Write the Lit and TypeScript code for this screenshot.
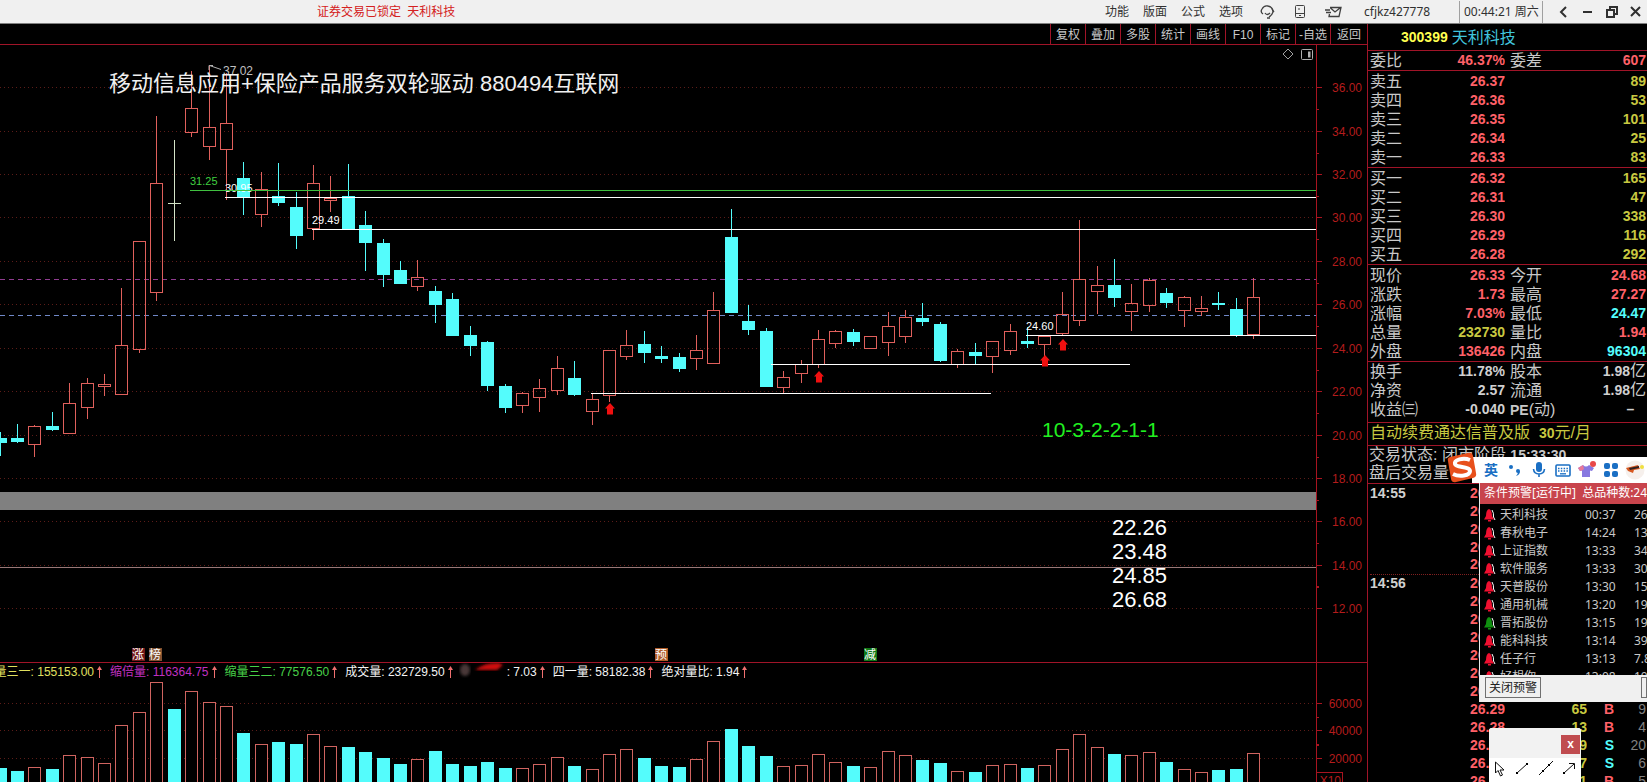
import { LitElement, html, svg, css } from "lit";
import { customElement, state } from "lit/decorators.js";

type Candle = [kind: "r" | "c" | "w", high: number, top: number, bottom: number, low: number];

/* Chart geometry is expressed on a 1316px wide plot and scaled to the real width. */
const BASE = 1316;
const STEP = 17.413;

const candles: Candle[] = [
  ["c", 432, 438, 443, 456], ["c", 424, 438, 442, 443], ["r", 425, 426, 444, 456], ["c", 412, 426, 430, 431],
  ["r", 383, 403, 433, 433], ["r", 378, 383, 407, 418], ["r", 374, 384, 386, 395], ["r", 288, 345, 394, 394],
  ["r", 241, 241, 349, 352], ["r", 116, 183, 292, 300], ["w", 140, 203, 204, 241], ["r", 71, 108, 132, 136],
  ["r", 65, 127, 146, 159], ["r", 73, 123, 149, 199], ["c", 162, 178, 198, 215], ["r", 172, 189, 214, 226],
  ["c", 163, 196, 203, 206], ["c", 192, 207, 236, 249], ["r", 165, 183, 228, 239], ["r", 176, 198, 200, 211],
  ["c", 164, 196, 229, 229], ["c", 211, 225, 243, 271], ["c", 239, 243, 275, 287], ["c", 261, 270, 284, 284],
  ["r", 260, 277, 286, 290], ["c", 286, 291, 305, 323], ["c", 293, 299, 336, 336], ["c", 326, 335, 346, 356],
  ["c", 341, 342, 386, 391], ["c", 384, 386, 408, 413], ["r", 392, 393, 405, 412], ["r", 379, 388, 397, 411],
  ["r", 356, 368, 390, 394], ["c", 361, 378, 395, 396], ["r", 393, 399, 411, 424], ["r", 350, 350, 395, 401],
  ["r", 330, 345, 356, 359], ["c", 331, 344, 353, 363], ["c", 346, 356, 359, 363], ["c", 353, 357, 369, 372],
  ["r", 335, 350, 358, 369], ["r", 292, 310, 363, 363], ["c", 209, 237, 313, 313], ["c", 305, 321, 330, 335],
  ["c", 328, 331, 387, 387], ["r", 371, 377, 387, 393], ["r", 360, 364, 373, 382], ["r", 330, 339, 364, 367],
  ["r", 330, 331, 343, 347], ["c", 329, 332, 342, 346], ["r", 336, 336, 348, 348], ["r", 312, 326, 342, 355],
  ["r", 310, 317, 336, 342], ["c", 303, 318, 322, 326], ["c", 322, 324, 361, 362], ["r", 349, 351, 364, 367],
  ["c", 343, 352, 356, 364], ["r", 341, 341, 356, 372], ["r", 324, 331, 350, 354], ["c", 327, 341, 344, 348],
  ["r", 336, 336, 344, 356], ["r", 292, 314, 333, 335], ["r", 220, 279, 320, 325], ["r", 266, 285, 291, 313],
  ["c", 259, 285, 298, 307], ["r", 284, 303, 311, 330], ["r", 278, 280, 305, 311], ["c", 288, 293, 303, 308],
  ["r", 296, 297, 310, 326], ["r", 296, 308, 311, 315], ["c", 292, 303, 305, 310], ["c", 298, 309, 335, 337],
  ["r", 278, 297, 334, 338],
];

const volumeTops = [
  768, 771, 767, 769, 755, 757, 763, 725, 712, 682, 709, 691, 702, 706, 733, 744, 742, 744, 734, 746, 747, 752, 758,
  764, 759, 751, 764, 766, 762, 768, 768, 764, 757, 766, 769, 754, 749, 758, 766, 767, 759, 741, 729, 746, 756, 766,
  765, 754, 762, 766, 767, 751, 755, 760, 763, 771, 772, 765, 764, 768, 765, 749, 734, 747, 754, 755, 752, 762, 769,
  772, 770, 769, 753,
];

const priceTicks: [string, number][] = [
  ["36.00", 87], ["34.00", 131], ["32.00", 174], ["30.00", 217], ["28.00", 261], ["26.00", 304], ["24.00", 348],
  ["22.00", 391], ["20.00", 435], ["18.00", 478], ["16.00", 521], ["14.00", 565], ["12.00", 608],
];
const volumeTicks: [string, number][] = [["60000", 703], ["40000", 730], ["20000", 758]];
const ARROWS: [number, number][] = [[610, 403], [819, 371], [1045, 355], [1063, 339]];

const TOP = 45;
const VTOP = 680;

@customElement("app-root")
export class AppRoot extends LitElement {
  @state() private plotWidth = BASE;
  private observer?: ResizeObserver;

  static styles = css`
    :host {
      display: flex; flex-direction: column; height: 100vh; overflow: hidden; background: #000;
      font: 12px/16px "Liberation Sans", "Noto Sans CJK SC", sans-serif; color: #c8c8c8;
    }
    * { box-sizing: border-box; }
    svg { display: block; }
    button { font: inherit; color: inherit; background: none; border: 0; padding: 0; margin: 0; white-space: nowrap; }
    table { border-collapse: collapse; table-layout: fixed; width: 100%; }
    td, th { padding: 0; font-weight: normal; text-align: left; white-space: nowrap; overflow: hidden; }

    .topbar {
      display: flex; align-items: center; height: 24px; flex: none; background: #f0f0f0; color: #303030;
      border-bottom: 1px solid #808080;
      font-family: "Noto Sans", "Noto Sans CJK SC", sans-serif;
    }
    .locked { flex: 1; padding-left: 317px; color: #d42020; white-space: pre; overflow: hidden; }
    .menu { display: flex; gap: 14px; }
    .icons { display: flex; align-items: center; gap: 20px; padding: 0 22px 0 17px; }
    .account { width: 95px; }
    .clock { border: solid #a0a0a0; border-width: 0 1px; height: 22px; line-height: 22px; padding-left: 4px; width: 84px; }
    .window { display: flex; gap: 8px; padding: 0 3px 0 13px; }

    .body { display: flex; flex: 1; min-height: 0; }
    .left { display: flex; flex-direction: column; flex: 1; min-width: 0; border-right: 1px solid #a01428; }
    .tools { display: flex; justify-content: flex-end; height: 21px; flex: none; border-bottom: 1px solid #a01428; }
    .tools button { width: 35px; border-left: 1px solid #a01428; padding-top: 1px; }
    .tools button:last-child { width: 37px; }
    .main { display: flex; height: 617px; flex: none; }
    .lower { display: flex; flex: 1; min-height: 0; }
    .plot { flex: 1; min-width: 0; overflow: hidden; }
    .axis { width: 51px; flex: none; }
    .plot svg, .axis svg { width: 100%; height: 100%; overflow: hidden; }
    .band { display: flex; height: 18px; flex: none; border-top: 1px solid #a01428; }
    .indicators { display: flex; align-items: center; flex: 1; min-width: 0; white-space: nowrap; gap: 8px; }
    .spine { width: 51px; flex: none; border-left: 1px solid #a81420; }
    .ind { display: flex; align-items: center; gap: 3px; flex: none; }
    .ind.first { justify-content: flex-end; width: 102px; }
    .ind svg { flex: none; }
    .yellow { color: #e0e060; } .purple { color: #c030c0; } .green { color: #48d048; } .white { color: #f4f4f4; }
    .smear { width: 38px; height: 16px; overflow: visible; }

    .side { position: relative; width: 279px; flex: none; overflow: hidden; }
    .side section, .side header { border-bottom: 1px solid #a01428; padding-left: 2px; font-size: 16px; line-height: 19px; }
    .side header { height: 27px; display: flex; align-items: center; gap: 4px; padding-left: 33px; color: #40c4dc; }
    .code { font-size: 14px; font-weight: bold; color: #ffff50; }
    .side tr { height: 19px; }
    .pad { padding-top: 1px; }
    .side section.fund { padding-bottom: 3px; }
    .c1 { width: 54px; } .c2 { width: 81px; } .c3 { width: 66px; }
    .side th + td + th { padding-left: 5px; }
    .num { font-size: 14px; font-weight: bold; text-align: right; }
    .num.last { padding-right: 1px; }
    .unit { font-size: 16px; font-weight: normal; line-height: 1; }
    .up { color: #ff6068; } .down { color: #54fcfc; } .vol { color: #c8c840; } .plain { color: #d0d0d0; }
    .side section.promo { color: #c8c840; height: 23px; line-height: 20px; white-space: pre; }
    .side section.status { height: 38px; line-height: 18px; padding-left: 1px; white-space: nowrap; overflow: hidden; }
    .small { font-size: 14px; font-weight: bold; line-height: 1; }

    .ticks tr { height: 18px; }
    .ticks { font-size: 14px; line-height: 18px; font-weight: bold; margin-left: 2px; width: 276px; }
    .side .ticks tr { height: 18px; }
    .ticks td { font-weight: bold; text-align: right; line-height: 17px; }
    .ticks td:first-child { text-align: left; color: #d0d0d0; }
    .ticks .minute td { border-top: 1px dotted #802020; }
    .ticks .grey { color: #808080; font-weight: normal; }
    .t1 { width: 60px; } .t2 { width: 75px; } .t3 { width: 82px; } .t4 { width: 27px; }

    .ime {
      position: absolute; top: 433px; right: 0; left: 104px; height: 26px; background: #fff; display: flex;
      align-items: center; padding-left: 7px; color: #1a6fc4;
    }
    .ime button { width: 24px; flex: none; display: grid; place-items: center; font-size: 14px; font-weight: bold; }
    .logo { position: absolute; left: -27px; top: -6px; }
    .alerts { position: absolute; top: 459px; left: 111px; right: 0; background: #000; border-left: 1px solid #e8e8e8;
      font: 12px/18px "Noto Sans", "Noto Sans CJK SC", sans-serif; overflow: hidden; }
    .alerts h2 { margin: 0; height: 21px; padding-left: 4px; background: #c8444c; color: #fff; font: inherit; line-height: 20px; white-space: pre; }
    .list { height: 171px; overflow: hidden; padding-top: 2px; }
    .list table { margin-left: 4px; width: 180px; }
    .side .list tr { height: 18px; }
    .a1 { width: 16px; } .a2 { width: 85px; } .a3 { width: 49px; }
    .foot { display: flex; justify-content: space-between; align-items: flex-start; height: 27px; padding: 2px 0 0 5px; background: #f0f0f0; color: #202020; }
    .foot button { height: 21px; border: 1px solid #707070; width: 56px; }
    .foot .next { width: 6px; }
    .draw { position: absolute; left: 121px; top: 704px; width: 92px; height: 60px; background: #fff; border-radius: 3px 3px 0 0; overflow: hidden; }
    .drawhead { height: 30px; background: #f2f2f2; display: flex; justify-content: flex-end; padding: 7px 1px 0 0; }
    .drawhead button { width: 19px; height: 19px; background: #c04c50; color: #fff; font-weight: bold; line-height: 17px; }
    .drawtools { display: flex; justify-content: space-around; padding-top: 3px; }

    .lbl { font-size: 12px; } .mark { font-size: 11px; } .title { font-size: 22px; fill: #f0f0f0; } .big { font-size: 22px; fill: #fff; }
    .ratio { font-size: 21px; fill: #20f020; } .tick { font-size: 12px; fill: #b41c1c; text-anchor: end; }
    .tag { font-size: 12px; fill: #fff; text-anchor: middle; }
  `;

  firstUpdated() {
    const plot = this.renderRoot.querySelector(".plot") as HTMLElement;
    const measure = () => { this.plotWidth = plot.clientWidth || BASE; };
    this.observer = new ResizeObserver(measure);
    this.observer.observe(plot);
    measure();
  }

  disconnectedCallback() {
    super.disconnectedCallback();
    this.observer?.disconnect();
  }

  private sx(x: number) { return Math.round((x * this.plotWidth) / BASE); }
  private cx(i: number) { return Math.floor(((STEP * i + 0.05) * this.plotWidth) / BASE); }

  private hline(y: number, from: number, to: number, color: string, dash = "none") {
    return svg`<line x1=${this.sx(from)} x2=${this.sx(to)} y1=${y + 0.5} y2=${y + 0.5} stroke=${color} stroke-dasharray=${dash}></line>`;
  }

  private candle([kind, high, top, bottom, low]: Candle, i: number) {
    const x = this.cx(i);
    if (kind === "w") return svg`<path d="M${x + 0.5} ${high}V${low}M${x - 6} ${top + 0.5}h13" stroke="#d4e4c8"></path>`;
    if (kind === "c") return svg`<path d="M${x + 0.5} ${high}V${low}" stroke="#54fcfc"></path>
      <rect x=${x - 6} y=${top} width="13" height=${Math.max(bottom - top, 2)} fill="#54fcfc"></rect>`;
    return svg`<path d="M${x + 0.5} ${high}V${top}M${x + 0.5} ${bottom}V${low + 1}" stroke="#e0605c"></path>
      <rect x=${x - 5.5} y=${top + 0.5} width="12" height=${Math.max(bottom - top, 1)} fill="none" stroke="#e0605c"></rect>`;
  }

  private tag(x: number, bg: string, text: string) {
    const left = this.sx(x);
    return svg`<rect x=${left} y="648" width="13" height="13" fill=${bg}></rect>
      <text class="tag" x=${left + 6} y="659">${text}</text>`;
  }

  private renderPlot() {
    const note = (x: number, y: number, text: string, fill: string, cls = "mark") =>
      svg`<text class=${cls} x=${this.sx(x)} y=${y} fill=${fill}>${text}</text>`;
    return html`<svg role="img" aria-label="K线图"><g transform="translate(0,${-TOP})">
      ${priceTicks.map(([, y]) => this.hline(y, 0, BASE, "#5c1c18", "1 3"))}
      ${this.hline(279, 0, BASE, "#903c90", "5 4")}
      ${this.hline(315, 0, BASE, "#7088c8", "5 4")}
      <rect x="0" y="492" width="100%" height="18" fill="#808080"></rect>
      ${this.hline(567, 0, BASE, "#987878")}
      ${candles.map((c, i) => this.candle(c, i))}
      ${this.hline(197, 225, BASE, "#fff")}
      ${note(225, 192, "30.95", "#fff")}
      ${this.hline(190, 190, BASE, "#40c040")}
      ${note(190, 185, "31.25", "#40d040")}
      ${this.hline(229, 312, BASE, "#fff")}
      ${note(312, 224, "29.49", "#fff")}
      ${this.hline(335, 1026, BASE, "#fff")}
      ${note(1026, 330, "24.60", "#fff")}
      ${this.hline(364, 771, 1130, "#fff")}
      ${this.hline(393, 591, 991, "#fff")}
      ${ARROWS.map(([x, y]) => svg`<path transform="translate(${this.sx(x)},${y})" d="M0 0L5 5.500H3V11.500H-3V5.500H-5Z" fill="#f01010"></path>`)}
      <path transform="translate(${this.sx(209)},65)" d="M0 5V0.500H4M0.500 0.500L12 4.500" stroke="#b0b0b0" fill="none"></path>
      ${note(223, 75, "37.02", "#c0c0c0", "lbl")}
      ${note(109, 91, "移动信息应用+保险产品服务双轮驱动 880494互联网", "#fff", "title")}
      ${note(1042, 437, "10-3-2-2-1-1", "#20f020", "ratio")}
      ${["22.26", "23.48", "24.85", "26.68"].map((t, i) => note(1112, 535 + i * 24, t, "#fff", "big"))}
      ${this.tag(132, "#701818", "涨")}${this.tag(149, "#805030", "榜")}${this.tag(655, "#b05c28", "预")}${this.tag(864, "#107818", "减")}
      <path transform="translate(${this.plotWidth - 28},54)" d="M0 -5L5 0L0 5L-5 0Z" fill="none" stroke="#a0a0a0"></path>
      <g transform="translate(${this.plotWidth - 15},49)" stroke="#b0b0b0"><rect x="0.500" y="0.500" width="11" height="10" rx="1" fill="none"></rect><rect x="7" y="2.500" width="2.500" height="6" fill="#b0b0b0" stroke="none"></rect></g>
    </g></svg>`;
  }

  private renderAxis(ticks: [string, number][], top: number, box = false) {
    const gap = ticks[1][1] - ticks[0][1];
    return html`<svg aria-hidden="true"><g transform="translate(0,${-top})" stroke="#a81420">
      <line x1="0.500" x2="0.500" y1=${top} y2="2000"></line>
      ${ticks.map(([t, y], i) => svg`<path d="M0 ${y + 0.5}h6M0 ${Math.round(y + gap / 2) + (i === ticks.length - 1 ? -gap : 0) + 0.5}h3"></path>
        <text class="tick" stroke="none" x="46" y=${y + 5}>${t}</text>`)}
      ${box ? svg`<rect x="0.500" y="772.500" width="26" height="20" fill="#000"></rect><text class="tick" stroke="none" x="25" y="785">X10</text>` : ""}
    </g></svg>`;
  }

  private renderVolume() {
    return html`<svg role="img" aria-label="成交量"><g transform="translate(0,${-VTOP})">
      ${volumeTicks.map(([, y]) => this.hline(y, 0, BASE, "#5c1c18", "1 3"))}
      ${volumeTops.map((y, i) => {
        const x = this.cx(i);
        return candles[i][0] === "c" || candles[i][0] === "w"
          ? svg`<rect x=${x - 6} y=${y} width="13" height="1000" fill="#54fcfc"></rect>`
          : svg`<rect x=${x - 5.5} y=${y + 0.5} width="12" height="1000" fill="#000" stroke="#d06460"></rect>`;
      })}
    </g></svg>`;
  }

  private indicator(text: string, cls: string) {
    return html`<span class="ind ${cls}">${text}<svg width="5" height="12"><path d="M2.500 0L5 4H0ZM2 3H3V12H2Z" fill="#f07070"></path></svg></span>`;
  }

  private orders(side: string, rows: [string, string, string][]) {
    return html`<section class="pad"><table aria-label=${side}><colgroup><col class="c1"><col class="c2"><col></colgroup>
      ${rows.map(([n, p, v]) => html`<tr><th scope="row">${side}${n}</th><td class="num up">${p}</td><td class="num last vol">${v}</td></tr>`)}
    </table></section>`;
  }

  private stats(rows: string[][], cls: string) {
    const value = (v: string) => v.endsWith("亿") ? html`${v.slice(0, -1)}<span class="unit">亿</span>` : v;
    const label = (v: string) => v.startsWith("PE") ? html`<span class="small">PE</span>${v.slice(2)}` : v;
    return html`<section class=${cls}><table><colgroup><col class="c1"><col class="c2"><col class="c3"><col></colgroup>
      ${rows.map(([a, av, ac, b, bv, bc]) => html`<tr><th scope="row">${a}</th><td class="num ${ac}">${value(av)}</td>
        <th scope="row">${label(b)}</th><td class="num last ${bc}">${value(bv)}</td></tr>`)}
    </table></section>`;
  }

  private renderTicks() {
    const rows: string[][] = [
      ...Array.from({ length: 12 }, (_, i) => [i === 0 ? "14:55" : i === 5 ? "14:56" : "", "26.33", "", "", ""]),
      ["", "26.29", "65", "B", "9"], ["", "26.28", "13", "B", "4"], ["", "26.28", "19", "S", "20"],
      ["", "26.28", "17", "S", "6"], ["", "26.30", "21", "B", "5"],
    ];
    return html`<table class="ticks"><colgroup><col class="t1"><col class="t2"><col class="t3"><col class="t4"><col></colgroup>
      ${rows.map(([t, p, v, d, n]) => html`<tr class=${t === "14:56" ? "minute" : ""}><td>${t}</td><td class="up">${p}</td>
        <td class="vol">${v}</td><td class=${d === "S" ? "down" : "up"}>${d}</td><td class="grey">${n}</td></tr>`)}</table>`;
  }

  private renderIme() {
    return html`<div class="ime">
      <svg class="logo" width="34" height="33" viewBox="0 0 34 33" role="img" aria-label="输入法"><path d="M5 6Q2 7 3 10L6 28Q7 32 11 31L28 27Q32 26 31 22L28 5Q27 1 23 2Z" fill="#e8501c"></path><path d="M25 9C18 6 9 9 10 13C11 17 25 15 25 20C25 25 14 26 8 23" fill="none" stroke="#fff" stroke-width="4"></path></svg>
      <button>英</button>
      <button aria-label="标点"><svg width="14" height="14"><circle cx="10" cy="8" r="2" fill="#1a6fc4"></circle><circle cx="3" cy="4" r="2" fill="#1a6fc4"></circle><path d="M12 8Q12 12 8 13Q10 11 10 9Z" fill="#1a6fc4"></path></svg></button>
      <button aria-label="语音"><svg width="14" height="16"><rect x="4" y="0" width="6" height="10" rx="3" fill="#1a6fc4"></rect><path d="M1.500 7Q2 12 7 12T12.500 7M7 12V15" stroke="#1a6fc4" stroke-width="1.600" fill="none"></path></svg></button>
      <button aria-label="键盘"><svg width="16" height="13"><rect x="1" y="1" width="14" height="11" rx="1" fill="none" stroke="#1a6fc4" stroke-width="1.600"></rect><path d="M3 4.500H13M3 7H13" stroke="#1a6fc4" stroke-width="1.500" stroke-dasharray="1.500 1.300"></path><path d="M5 9.800H11" stroke="#1a6fc4" stroke-width="1.300"></path></svg></button>
      <button aria-label="皮肤"><svg width="18" height="18"><path d="M5 4Q8 7 11 4L16 7L14 10L12 9.500V16H4V9.500L2 10L0 7Z" fill="#8878e0"></path><path d="M0 7L5 4L6 8L4 9.500L2 10Z" fill="#e87898"></path><circle cx="15" cy="3" r="3" fill="#e84848"></circle></svg></button>
      <button aria-label="工具箱"><svg width="14" height="14" fill="#1a6fc4"><rect width="6" height="6" rx="2"></rect><rect x="8" width="6" height="6" rx="2"></rect><rect y="8" width="6" height="6" rx="2"></rect><rect x="8" y="8" width="6" height="6" rx="2"></rect></svg></button>
      <button aria-label="头像"><svg width="20" height="20"><circle cx="10" cy="10" r="9.500" fill="#f6f0ec"></circle><path d="M1 8L13 5L15 9L9 10L8 13L3 11Z" fill="#d85820"></path><path d="M4 8L14 6V8L5 10Z" fill="#302020"></path><circle cx="17" cy="7" r="2" fill="#f0e040"></circle></svg></button>
    </div>`;
  }

  private renderAlerts() {
    const rows = [
      ["天利科技", "00:37", "26.33"], ["春秋电子", "14:24", "13.20"], ["上证指数", "13:33", "3400"], ["软件服务", "13:33", "3050"],
      ["天普股份", "13:30", "15.10"], ["通用机械", "13:20", "1960"], ["晋拓股份", "13:15", "19.20"], ["能科科技", "13:14", "39.10"],
      ["任子行", "13:13", "7.83"], ["好想你", "13:08", "10.20"],
    ];
    return html`<div class="alerts"><h2>条件预警[运行中]  总品种数:24</h2>
      <div class="list"><table><colgroup><col class="a1"><col class="a2"><col class="a3"><col></colgroup>
      ${rows.map(([n, t, p]) => html`<tr><td><svg width="12" height="13"><path d="M8 1Q10 4 9.500 8L11 11" fill="none" stroke="#fff"></path><path d="M5 0Q8 1 8 7L10 10.500H0L2 7Q2 1 5 0Z" fill=${n === "晋拓股份" ? "#109010" : "#f01030"}></path><rect x="4" y="11" width="3" height="1.500" fill=${n === "晋拓股份" ? "#109010" : "#f01030"}></rect></svg></td>
        <td>${n}</td><td>${t}</td><td>${p}</td></tr>`)}</table></div>
      <div class="foot"><button>关闭预警</button><button class="next" aria-label="更多"></button></div></div>`;
  }

  render() {
    return html`
      <div class="topbar">
        <div class="locked">证券交易已锁定  天利科技</div>
        <nav class="menu">${["功能", "版面", "公式", "选项"].map((t) => html`<button>${t}</button>`)}</nav>
        <div class="icons">
          <svg width="15" height="14" fill="none" stroke="#404040"><path d="M3 9Q0 7 2 4Q4 0 8 1Q13 2 13 7Q12 10 9 12" stroke-width="1.300"></path><path d="M5 8Q7 11 10 8M7 13H10M12 4L14 7" stroke-width="1.300"></path></svg>
          <svg width="10" height="13" fill="none" stroke="#404040"><rect x="0.500" y="0.500" width="9" height="12" rx="1"></rect><path d="M0 8.500H10M4 10.500H6M4 3V5"></path></svg>
          <svg width="17" height="12" fill="none" stroke="#404040" stroke-width="1.300"><path d="M5 1.500H16L14 10.500H4L4.500 8M5.500 2L10 6L15 2M0 4H5M1 6.500H6"></path></svg>
        </div>
        <span class="account">cfjkz427778</span>
        <span class="clock">00:44:21 周六</span>
        <div class="window">
          <button aria-label="后退"><svg width="16" height="16" fill="none" stroke="#303030" stroke-width="2"><path d="M10 3L5 8L10 13"></path></svg></button>
          <button aria-label="最小化"><svg width="16" height="16" stroke="#303030" stroke-width="2"><path d="M3 8H12"></path></svg></button>
          <button aria-label="还原"><svg width="16" height="16" fill="none" stroke="#303030" stroke-width="2"><path d="M3 6H10V13H3ZM6 6V3H13V10H10"></path></svg></button>
          <button aria-label="关闭"><svg width="16" height="16" stroke="#303030" stroke-width="2"><path d="M3 3L12 12M12 3L3 12"></path></svg></button>
        </div>
      </div>
      <div class="body">
        <main class="left">
          <div class="tools">${["复权", "叠加", "多股", "统计", "画线", "F10", "标记", "-自选", "返回"].map((t) => html`<button>${t}</button>`)}</div>
          <div class="main"><div class="plot">${this.renderPlot()}</div><div class="axis">${this.renderAxis(priceTicks, TOP)}</div></div>
          <div class="band"><div class="indicators">
            ${this.indicator("缩量三一: 155153.00", "first yellow")}${this.indicator("缩倍量: 116364.75", "purple")}
            ${this.indicator("缩量三二: 77576.50", "green")}${this.indicator("成交量: 232729.50", "white")}
            <svg class="smear" viewBox="0 0 38 16" aria-hidden="true"><defs><filter id="soft"><feGaussianBlur stdDeviation="1.500"></feGaussianBlur></filter></defs><ellipse cx="4" cy="6" rx="5" ry="6" fill="#483838" filter="url(#soft)"></ellipse><path d="M14 6Q24 -2 38 -1L42 1L36 6Z" fill="#d01010" filter="url(#soft)"></path></svg>
            ${this.indicator(": 7.03", "white")}${this.indicator("四一量: 58182.38", "white")}${this.indicator("绝对量比: 1.94", "white")}
          </div><div class="spine"></div></div>
          <div class="lower"><div class="plot">${this.renderVolume()}</div><div class="axis">${this.renderAxis(volumeTicks, VTOP, true)}</div></div>
        </main>
        <aside class="side">
          <header><span class="code">300399</span><span>天利科技</span></header>
          ${this.stats([["委比", "46.37%", "up", "委差", "607", "up"]], "")}
          ${this.orders("卖", [["五", "26.37", "89"], ["四", "26.36", "53"], ["三", "26.35", "101"], ["二", "26.34", "25"], ["一", "26.33", "83"]])}
          ${this.orders("买", [["一", "26.32", "165"], ["二", "26.31", "47"], ["三", "26.30", "338"], ["四", "26.29", "116"], ["五", "26.28", "292"]])}
          ${this.stats([["现价", "26.33", "up", "今开", "24.68", "up"], ["涨跌", "1.73", "up", "最高", "27.27", "up"],
            ["涨幅", "7.03%", "up", "最低", "24.47", "down"], ["总量", "232730", "vol", "量比", "1.94", "up"],
            ["外盘", "136426", "up", "内盘", "96304", "down"]], "pad")}
          ${this.stats([["换手", "11.78%", "plain", "股本", "1.98亿", "plain"], ["净资", "2.57", "plain", "流通", "1.98亿", "plain"],
            ["收益㈢", "-0.040", "plain", "PE(动)", "–\u00a0\u00a0\u00a0", "plain"]], "fund")}
          <section class="promo">自动续费通达信普及版  <span class="small">30</span>元/月</section>
          <section class="status">交易状态: 闭市阶段 <span class="small">15:33:30</span><br>盘后交易量</section>
          ${this.renderTicks()}
          ${this.renderIme()}
          ${this.renderAlerts()}
          <div class="draw"><div class="drawhead"><button aria-label="关闭">x</button></div>
            <div class="drawtools">
              <svg width="12" height="16"><path d="M1.500 1V12L4 9.500L6.500 15L8.500 14L6 9H10Z" fill="#fff" stroke="#101010"></path></svg>
              <svg width="14" height="14"><path d="M2 12L12 3" stroke="#101010"></path><rect x="1" y="11" width="2" height="2"></rect><rect x="11" y="2" width="2" height="2"></rect></svg>
              <svg width="14" height="14"><path d="M0 14L14 0" stroke="#101010"></path><rect x="3" y="9" width="2" height="2"></rect><rect x="9" y="3" width="2" height="2"></rect></svg>
              <svg width="14" height="14"><path d="M2 12L12 3M7 2.500H12.500V8" stroke="#101010" fill="none"></path><rect x="1" y="11" width="2" height="2"></rect></svg>
            </div></div>
        </aside>
      </div>`;
  }
}
